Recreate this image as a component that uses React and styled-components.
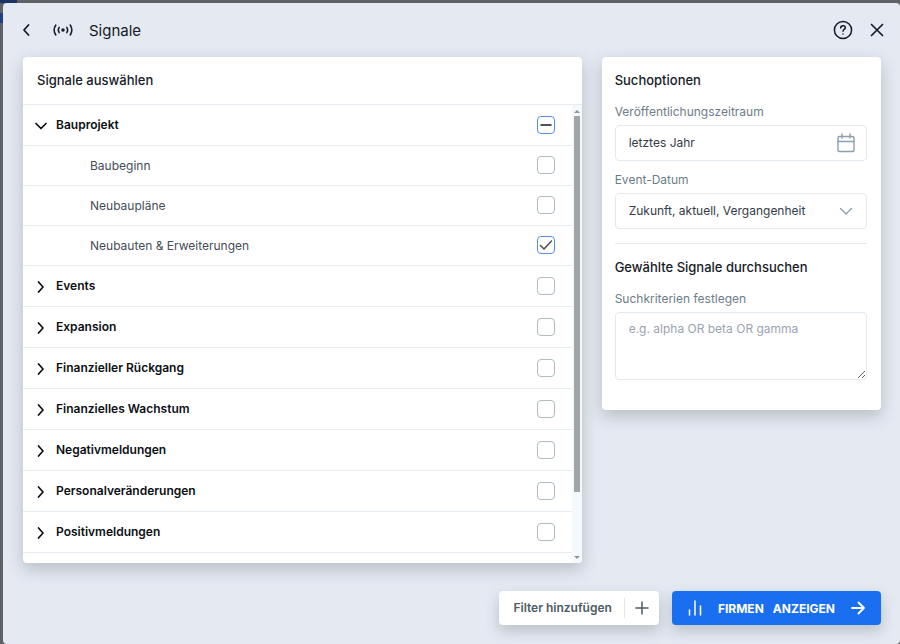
import React, { useState } from "react";
import styled, { createGlobalStyle } from "styled-components";

const groups = [
  {
    name: "Bauprojekt",
    children: ["Baubeginn", "Neubaupläne", "Neubauten & Erweiterungen"]
  },
  { name: "Events" },
  { name: "Expansion" },
  { name: "Finanzieller Rückgang" },
  { name: "Finanzielles Wachstum" },
  { name: "Negativmeldungen" },
  { name: "Personalveränderungen" },
  { name: "Positivmeldungen" }
];

const Icon = ({ size = 16, width = 1.5, children }) => (
  <svg
    width={size}
    height={size}
    viewBox={`0 0 ${size} ${size}`}
    fill="none"
    stroke="currentColor"
    strokeWidth={width}
    strokeLinecap="round"
    strokeLinejoin="round"
    aria-hidden="true"
  >
    {children}
  </svg>
);

const App = () => {
  const [open, setOpen] = useState({ Bauprojekt: true });
  const [checked, setChecked] = useState({ "Neubauten & Erweiterungen": true });
  const [query, setQuery] = useState("");

  const toggleOpen = name => setOpen({ ...open, [name]: !open[name] });
  const toggleChecked = name =>
    setChecked({ ...checked, [name]: !checked[name] });

  return (
    <Backdrop>
      <GlobalStyle />
      <Modal>
        <Header>
          <BackBtn aria-label="Zurück">
            <Icon width={1.8}>
              <path d="M9.5 3 5 8l4.5 5" />
            </Icon>
          </BackBtn>
          <Icon size={20} width={1.5}>
            <circle cx="10" cy="10" r="1" fill="currentColor" />
            <path d="M6.2 7.4c-1.1 1.6-1.1 3.6 0 5.2M13.8 7.4c1.1 1.6 1.1 3.6 0 5.2" />
            <path d="M2.8 5c-2 3-2 7 0 10M17.2 5c2 3 2 7 0 10" />
          </Icon>
          <Title>Signale</Title>
          <IconBtn aria-label="Hilfe">
            <Icon size={20} width={1.5}>
              <circle cx="10" cy="10" r="8.6" />
              <path d="M7.7 8c0-1.4 1-2.3 2.3-2.3s2.3.9 2.3 2.1c0 1.6-2.3 1.7-2.3 3.4" />
              <path d="M10 13.9v.1" />
            </Icon>
          </IconBtn>
          <CloseBtn aria-label="Schließen">
            <Icon width={1.7}>
              <path d="M2.5 2.5l11 11M13.5 2.5l-11 11" />
            </Icon>
          </CloseBtn>
        </Header>

        <Main>
          <SignalCard>
            <CardTitle>Signale auswählen</CardTitle>
            <ListArea>
              <List>
                {groups.map(group => {
                  const children = group.children || [];
                  const partial = children.some(c => checked[c]);
                  return (
                    <li key={group.name}>
                      <Row>
                        <Toggle
                          aria-expanded={!!open[group.name]}
                          onClick={() => toggleOpen(group.name)}
                        >
                          <Icon width={1.7}>
                            {open[group.name] ? (
                              <path d="M3 6.5l5 5 5-5" />
                            ) : (
                              <path d="M5.5 4l4.5 5-4.5 5" />
                            )}
                          </Icon>
                          {group.name}
                        </Toggle>
                        <Check
                          label={group.name}
                          checked={!!checked[group.name]}
                          partial={partial}
                          onChange={() => toggleChecked(group.name)}
                        />
                      </Row>
                      {open[group.name] &&
                        children.map(child => (
                          <SubRow key={child}>
                            {child}
                            <Check
                              label={child}
                              checked={!!checked[child]}
                              onChange={() => toggleChecked(child)}
                            />
                          </SubRow>
                        ))}
                    </li>
                  );
                })}
              </List>
              <ScrollBar aria-hidden="true">
                <Arrow $up />
                <Track>
                  <Thumb />
                </Track>
                <Arrow />
              </ScrollBar>
            </ListArea>
          </SignalCard>

          <OptionsCard>
            <SectionTitle>Suchoptionen</SectionTitle>
            <Label htmlFor="period">Veröffentlichungszeitraum</Label>
            <Field>
              <TextInput id="period" defaultValue="letztes Jahr" />
              <Icon size={20} width={1.4}>
                <rect x="2" y="3.5" width="16" height="15" rx="1.5" />
                <path d="M2 8.5h16M6 1v4M14 1v4" />
              </Icon>
            </Field>
            <Label htmlFor="eventDate">Event-Datum</Label>
            <Field>
              <Select id="eventDate">
                <option>Zukunft, aktuell, Vergangenheit</option>
              </Select>
              <Icon size={20} width={1.4}>
                <path d="M4.5 7.5l5.5 5.5 5.5-5.5" />
              </Icon>
            </Field>
            <Divider />
            <SectionTitle>Gewählte Signale durchsuchen</SectionTitle>
            <Label htmlFor="criteria">Suchkriterien festlegen</Label>
            <TextArea
              id="criteria"
              placeholder="e.g. alpha OR beta OR gamma"
              value={query}
              onChange={e => setQuery(e.target.value)}
            />
          </OptionsCard>
        </Main>

        <Footer>
          <FilterBtn>
            <FilterText>Filter hinzufügen</FilterText>
            <Icon>
              <path d="M8 2v12M2 8h12" />
            </Icon>
          </FilterBtn>
          <ShowBtn>
            <Icon>
              <path d="M2.5 10v5M8 1v14M13.5 6v9" />
            </Icon>
            <Words>
              <span>FIRMEN</span>
              <span>ANZEIGEN</span>
            </Words>
            <Icon width={1.8}>
              <path d="M2 8h12M8.5 2.5L14 8l-5.5 5.5" />
            </Icon>
          </ShowBtn>
        </Footer>
      </Modal>
    </Backdrop>
  );
};

const Check = ({ label, checked, partial, onChange }) => (
  <CheckBox $active={checked || partial}>
    <input
      type="checkbox"
      aria-label={label}
      checked={checked}
      onChange={onChange}
    />
    {(checked || partial) && (
      <Icon>
        {checked ? <path d="M2.5 8.5L6 12l7.5-8" /> : <path d="M3 8h10" />}
      </Icon>
    )}
  </CheckBox>
);

export default App;

const GlobalStyle = createGlobalStyle`
  * {
    box-sizing: border-box;
  }
  body {
    margin: 0;
    font-family: Inter, "Liberation Sans", sans-serif;
    font-size: 12px;
    color: #161b26;
  }
  button, input, select, textarea {
    font: inherit;
    color: inherit;
  }
  button {
    border: 0;
    padding: 0;
    background: none;
    cursor: pointer;
  }
`;

const Backdrop = styled.div`
  height: 100vh;
  min-height: 520px;
  padding: 3px 0 0 3px;
  background: linear-gradient(#1d3463, #1d3463) 0 0 / 17px 3px no-repeat,
    linear-gradient(#1f3f86, #1f3f86) 0 13px / 3px 10px no-repeat, #5e6166;
`;

const Modal = styled.div`
  height: 100%;
  display: flex;
  flex-direction: column;
  padding: 0 19px 19px 20px;
  border-radius: 4px;
  background: #e4e9f2;
`;

const Header = styled.header`
  height: 54px;
  display: flex;
  align-items: center;
  gap: 16px;
`;

const IconBtn = styled.button`
  display: flex;
`;

const BackBtn = styled(IconBtn)`
  margin: 0 2px 0 -4px;
`;

const CloseBtn = styled(IconBtn)`
  margin-right: -4px;
`;

const Title = styled.h1`
  flex: 1;
  margin: 0;
  font-size: 15px;
  font-weight: 400;
`;

const Main = styled.main`
  flex: 1;
  min-height: 0;
  display: grid;
  grid-template-columns: 2fr 1fr;
  gap: 20px;
`;

const Card = styled.section`
  border-radius: 4px;
  background: #fff;
  box-shadow: 0 6px 16px rgba(60, 75, 75, 0.27);
`;

const SignalCard = styled(Card)`
  min-height: 0;
  display: flex;
  flex-direction: column;
  overflow: hidden;
`;

const OptionsCard = styled(Card)`
  align-self: start;
  padding: 13px 14px 30px 13px;
`;

const CardTitle = styled.h2`
  margin: 0;
  padding: 0 14px;
  border-bottom: 1px solid #e6edf2;
  font-size: 13px;
  font-weight: 500;
  line-height: 47px;
`;

const ListArea = styled.div`
  flex: 1;
  min-height: 0;
  display: flex;
`;

const List = styled.ul`
  flex: 1;
  margin: 0;
  padding: 0;
  list-style: none;
  overflow-y: auto;
`;

const Row = styled.div`
  height: 41px;
  display: flex;
  align-items: center;
  justify-content: space-between;
  padding: 0 17px 1px 10px;
  border-bottom: 1px solid #e6edf2;
`;

const SubRow = styled(Row)`
  height: 40px;
  padding-left: 67px;
  color: #454d57;
`;

const Toggle = styled.button`
  display: flex;
  align-items: center;
  gap: 7px;
  font-weight: 600;
  color: #0c0f14;
`;

const CheckBox = styled.label`
  width: 18px;
  height: 18px;
  display: grid;
  place-items: center;
  border: 1px solid ${props => (props.$active ? "#5b8def" : "#aebbc2")};
  border-radius: 4px;

  input,
  svg {
    grid-area: 1 / 1;
    margin: 0;
  }
  input {
    appearance: none;
    width: 16px;
    height: 16px;
  }
  svg {
    pointer-events: none;
  }
`;

const ScrollBar = styled.div`
  width: 10px;
  display: flex;
  flex-direction: column;
  align-items: center;
  gap: 3px;
  padding: 5px 0 4px;
  background: #f5f9fb;
`;

const Arrow = styled.span`
  border: 3px solid transparent;
  border-top-width: ${props => (props.$up ? 0 : 3)}px;
  border-bottom-width: ${props => (props.$up ? 3 : 0)}px;
  border-top-color: #8f9496;
  border-bottom-color: #8f9496;
`;

const Track = styled.div`
  flex: 1;
  width: 6px;
`;

const Thumb = styled.div`
  height: 86%;
  background: #a1a5a6;
`;

const SectionTitle = styled.h2`
  margin: 0 0 12px;
  font-size: 13px;
  font-weight: 500;
  line-height: 20px;
`;

const Label = styled.label`
  display: block;
  margin-bottom: 4px;
  line-height: 19px;
  color: #6d7d88;
`;

const Field = styled.div`
  height: 36px;
  display: flex;
  align-items: center;
  margin-bottom: 9px;
  padding: 0 10px 0 13px;
  border: 1px solid #e4ebf0;
  border-radius: 4px;
  color: #8aa0ac;
`;

const TextInput = styled.input`
  flex: 1;
  min-width: 0;
  padding: 0 0 2px;
  border: 0;
  outline: 0;
  background: none;
  color: #343b45;
`;

const Select = styled(TextInput).attrs({ as: "select" })`
  appearance: none;
`;

const Divider = styled.hr`
  margin: 14px 0 13px;
  border: 0;
  border-top: 1px solid #e1e9ee;
`;

const TextArea = styled.textarea`
  display: block;
  width: 100%;
  height: 68px;
  padding: 8px 13px;
  border: 1px solid #e4ebf0;
  border-radius: 4px;
  outline: 0;
  resize: vertical;

  &::placeholder {
    color: #9aa3b2;
  }
`;

const Footer = styled.footer`
  display: flex;
  justify-content: flex-end;
  gap: 13px;
  padding-top: 28px;
`;

const FilterBtn = styled.button`
  height: 34px;
  display: flex;
  align-items: center;
  gap: 9px;
  padding: 0 9px 0 14px;
  border-radius: 4px;
  background: #fff;
  box-shadow: 0 6px 14px rgba(60, 75, 75, 0.25);
  font-weight: 600;
  color: #4d5b63;
`;

const FilterText = styled.span`
  padding-right: 12px;
  border-right: 1px solid #e1e7ec;
  line-height: 20px;
`;

const ShowBtn = styled(FilterBtn)`
  gap: 15px;
  padding: 0 15px;
  background: #1a6ff0;
  color: #fff;
`;

const Words = styled.span`
  display: flex;
  gap: 9px;
  font-weight: 700;
`;
